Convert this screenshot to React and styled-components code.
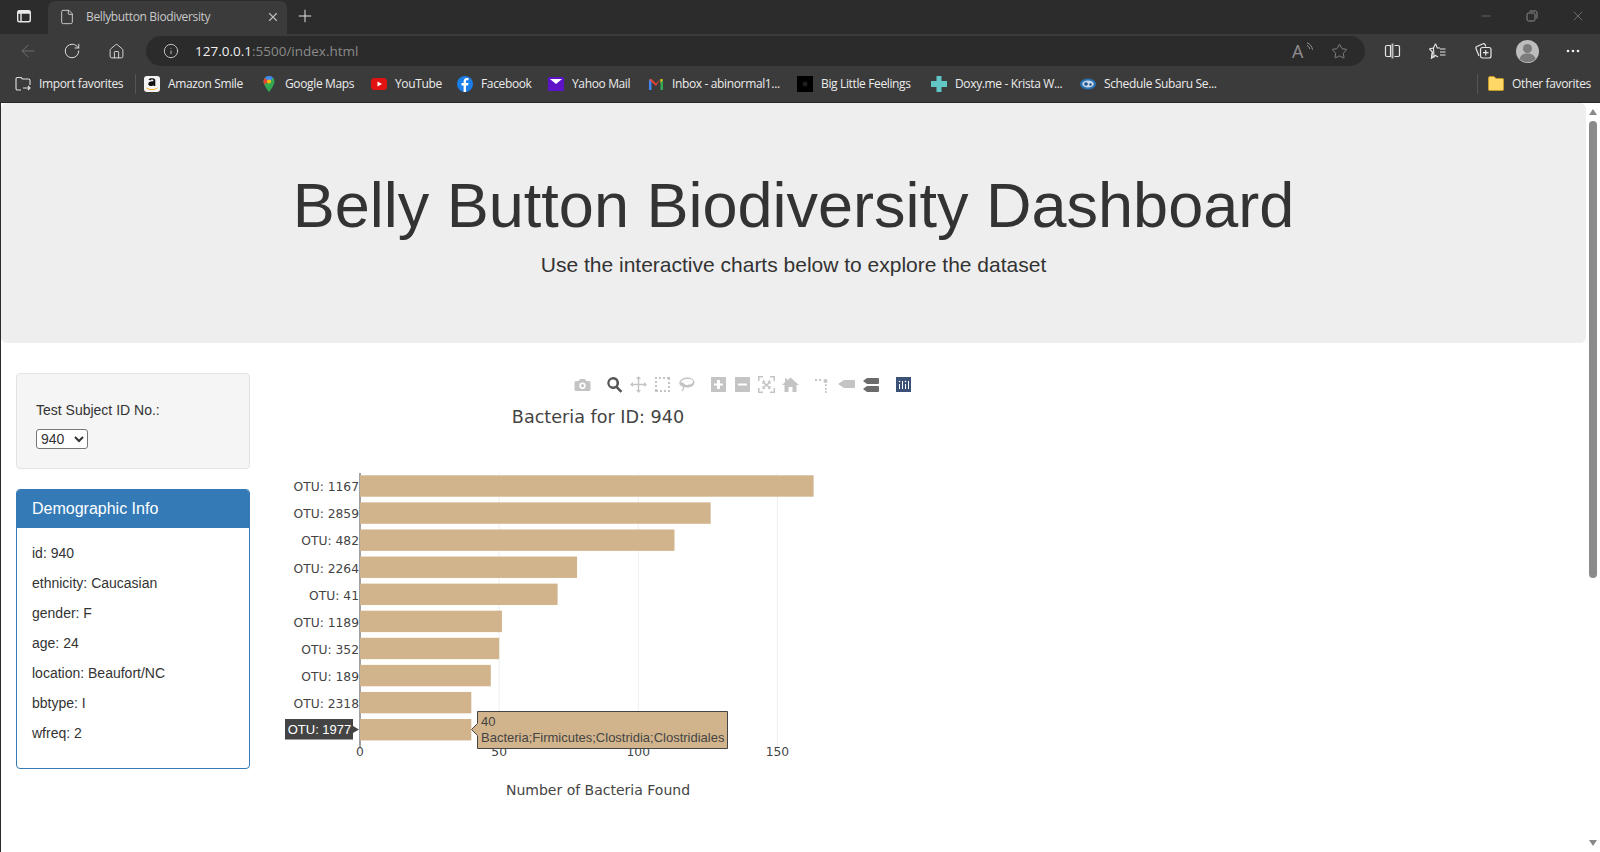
import styled, { createGlobalStyle } from 'styled-components'
import { ArrowLeft, RotateCw, Home, Info, Star, X, Plus, Minus, File } from 'lucide-react'

const GlobalStyle = createGlobalStyle`
	html, body {
		margin: 0;
		height: 100%;
		overflow: hidden;
		background: #fff;
	}
	* {
		box-sizing: border-box;
	}
`

const Window = styled.div`
	width: 1600px;
	height: 852px;
	display: flex;
	flex-direction: column;
	overflow: hidden;
	font-family: 'Liberation Sans', Arial, sans-serif;
	color: #333;
`

const TabStrip = styled.div`
	height: 34px;
	flex: none;
	display: flex;
	align-items: flex-start;
	background: #2c2c2c;
	color: #d8d8d8;
`

const SideButton = styled.div`
	width: 48px;
	height: 32px;
	display: flex;
	align-items: center;
	justify-content: center;
`

const Tab = styled.div`
	width: 239px;
	height: 33px;
	margin-top: 1px;
	display: flex;
	align-items: center;
	padding: 0 7px 2px 11px;
	background: #3b3b3b;
	border-radius: 7px 7px 0 0;
	font: 12px 'Open Sans', sans-serif;
	letter-spacing: -0.35px;
	color: #c9c9c9;
`

const TabTitle = styled.span`
	flex: 1;
	margin-left: 11px;
`

const NewTab = styled.div`
	width: 36px;
	height: 32px;
	display: flex;
	align-items: center;
	justify-content: center;
`

const WindowControls = styled.div`
	margin-left: auto;
	margin-right: -1px;
	display: flex;
	height: 32px;
	color: #8c8c8c;
`

const WindowButton = styled.div`
	width: 46px;
	height: 32px;
	display: flex;
	align-items: center;
	justify-content: center;
`

const Toolbar = styled.div`
	height: 34px;
	flex: none;
	display: flex;
	align-items: center;
	padding-left: 6px;
	background: #3b3b3b;
	color: #e4e4e4;
`

const NavButton = styled.div`
	width: 44px;
	height: 30px;
	display: flex;
	align-items: center;
	justify-content: center;
	color: ${(props) => (props.$dim ? '#6f6f6f' : '#e0e0e0')};
`

const AddressBar = styled.div`
	width: 1219px;
	height: 30px;
	margin-left: 8px;
	display: flex;
	align-items: center;
	padding: 0 17px 0 17px;
	border-radius: 15px;
	background: #2b2b2b;
	color: #d5d5d5;
`

const Url = styled.div`
	margin-left: 16px;
	font: 13.5px 'Open Sans', sans-serif;
	color: #f0f0f0;
	span {
		color: #8a8a8a;
	}
`

const AddressActions = styled.div`
	margin-left: auto;
	display: flex;
	align-items: center;
	gap: 22px;
	color: #8f8f8f;
`

const ReadAloud = styled.div`
	position: relative;
	width: 17px;
	font: 18px 'Open Sans', sans-serif;
	line-height: 18px;
`

const ReadWaves = styled.svg`
	position: absolute;
	top: 0;
	right: -6px;
`

const ToolIcons = styled.div`
	display: flex;
	align-items: center;
	padding-left: 5px;
`

const ToolIcon = styled.div`
	width: 45px;
	height: 30px;
	display: flex;
	align-items: center;
	justify-content: center;
`

const BookmarkBar = styled.div`
	height: 35px;
	flex: none;
	display: flex;
	align-items: center;
	padding: 0 0 3px 15px;
	background: #3b3b3b;
	border-bottom: 1px solid #262626;
`

const Bookmark = styled.div`
	display: flex;
	align-items: center;
	gap: 8px;
	margin-right: ${(props) => props.$after || 17}px;
`

const BookmarkLabel = styled.span`
	width: ${(props) => props.$w}px;
	font: 12px 'Open Sans', sans-serif;
	letter-spacing: -0.36px;
	color: #ececec;
	white-space: nowrap;
`

const Separator = styled.div`
	width: 1px;
	height: 20px;
	margin-right: ${(props) => props.$after}px;
	background: #555;
`

const BookmarkEnd = styled.div`
	margin-left: auto;
	display: flex;
	align-items: center;
`

const Viewport = styled.div`
	flex: 1;
	min-height: 0;
	display: flex;
	border-left: 1px solid #2a2a2a;
`

const Page = styled.main`
	width: 1585px;
	background: #fff;
	overflow: hidden;
`

const Jumbotron = styled.header`
	height: 240px;
	padding: 48px 60px;
	margin-bottom: 30px;
	background: #eee;
	border-radius: 6px;
	text-align: center;
`

const Heading = styled.h1`
	margin: 20px 0 10px;
	font-size: 63px;
	font-weight: 500;
	line-height: 69.3px;
	color: #333;
`

const Lead = styled.p`
	margin: 0;
	font-size: 21px;
	line-height: 30px;
	font-weight: 400;
`

const Row = styled.div`
	display: flex;
	padding-left: 15px;
`

const Sidebar = styled.aside`
	width: 234px;
	flex: none;
`

const Well = styled.div`
	height: 96px;
	padding: 29px 19px 0;
	margin-bottom: 20px;
	background: #f5f5f5;
	border: 1px solid #e3e3e3;
	border-radius: 4px;
	font-size: 14px;
`

const FieldLabel = styled.h6`
	margin: 0 0 11px;
	font-size: 14px;
	font-weight: 500;
	line-height: 15.4px;
`

const SubjectSelect = styled.select`
	display: block;
	width: 52px;
	height: 20px;
	padding: 0;
	font: 14px 'Liberation Sans', Arial, sans-serif;
	color: #333;
	background: #fff;
	border: 1px solid #767676;
	border-radius: 3px;
`

const Panel = styled.section`
	height: 280px;
	border: 1px solid #337ab7;
	border-radius: 4px;
	background: #fff;
	overflow: hidden;
`

const PanelHeading = styled.div`
	height: 37.6px;
	padding: 10px 15px;
	background: #337ab7;
	font-size: 16px;
	line-height: 17.6px;
	color: #fff;
`

const PanelBody = styled.div`
	padding: 15px;
`

const InfoLine = styled.p`
	margin: 0 0 10px;
	font-size: 14px;
	line-height: 20px;
	color: #333;
`

const ChartArea = styled.div`
	position: relative;
	width: 660px;
	height: 450px;
	margin-left: 15px;
	flex: none;
`

const Modebar = styled.div`
	position: absolute;
	top: 3px;
	right: 14px;
	display: flex;
	gap: 15px;
`

const ModeGroup = styled.div`
	display: flex;
	gap: 7px;
`

const ModeIcon = styled.svg`
	display: block;
	width: 17px;
	height: 17px;
	fill: ${(props) => props.$tone || '#c4c4c4'};
`

const PlotlyLogo = styled.svg`
	display: block;
	margin-left: 2px;
`

const PlotSvg = styled.svg`
	display: block;
`

const TickLabel = styled.text`
	font: 12.3px 'DejaVu Sans', Verdana, sans-serif;
	fill: #444;
`

const PlotTitle = styled.text`
	font: ${(props) => props.$size}px 'DejaVu Sans', Verdana, sans-serif;
	fill: #444;
	text-anchor: middle;
`

const HoverText = styled.text`
	font: 13px 'Liberation Sans', Arial, sans-serif;
	fill: ${(props) => (props.$light ? '#fff' : '#444')};
`

const Scrollbar = styled.div`
	width: 14px;
	flex: none;
	display: flex;
	flex-direction: column;
	align-items: center;
	background: #fff;
	padding-top: 6px;
`

const ScrollArrow = styled.div`
	width: 0;
	height: 0;
	border-left: 4.5px solid transparent;
	border-right: 4.5px solid transparent;
	${(props) => (props.$down ? 'border-top' : 'border-bottom')}: 6px solid #8a8a8a;
	${(props) => (props.$down ? 'margin-top: auto; margin-bottom: 6px;' : '')}
`

const ScrollThumb = styled.div`
	width: 8px;
	height: 457px;
	margin-top: 6px;
	border-radius: 4px;
	background: #8b8b8b;
`

const bars = [
	['OTU: 1167', 163],
	['OTU: 2859', 126],
	['OTU: 482', 113],
	['OTU: 2264', 78],
	['OTU: 41', 71],
	['OTU: 1189', 51],
	['OTU: 352', 50],
	['OTU: 189', 47],
	['OTU: 2318', 40],
	['OTU: 1977', 40],
]

const demographics = [
	'id: 940',
	'ethnicity: Caucasian',
	'gender: F',
	'age: 24',
	'location: Beaufort/NC',
	'bbtype: I',
	'wfreq: 2',
]

const bookmarks = [
	{ icon: 'amazon', label: 'Amazon Smile', w: 76 },
	{ icon: 'maps', label: 'Google Maps', w: 69 },
	{ icon: 'youtube', label: 'YouTube', w: 45 },
	{ icon: 'facebook', label: 'Facebook', w: 50 },
	{ icon: 'yahoo', label: 'Yahoo Mail', w: 59 },
	{ icon: 'gmail', label: 'Inbox - abinormal1...', w: 108 },
	{ icon: 'black', label: 'Big Little Feelings', w: 93 },
	{ icon: 'doxy', label: 'Doxy.me - Krista W...', w: 108 },
	{ icon: 'subaru', label: 'Schedule Subaru Se...', w: 113 },
]

function Favicon({ name }) {
	const shapes = {
		amazon: (
			<>
				<rect width="16" height="16" rx="3" fill="#f4f4f4" />
				<path d="M4.500 3.500c1-1.500 6.500-2 6.800.8v5.700H9.500v-.9c-1.300 1.500-5.200 1.400-5.200-1.100 0-2.500 3.100-2.800 5.100-2.800v-.7c0-1.500-2.500-1.300-3-.1z" fill="#111" />
				<path d="M2 11.200c3.400 2.600 8.600 2.600 12 0-1 3.400-10.800 3.900-12 0z" fill="#f90" />
			</>
		),
		maps: (
			<>
				<path d="M8 0a5.500 5.500 0 0 0-5.500 5.500C2.500 9.500 8 16 8 16s5.500-6.500 5.500-10.500A5.500 5.500 0 0 0 8 0z" fill="#34a853" />
				<path d="M8 0a5.500 5.500 0 0 0-4.200 2L8 5.500 12.300 2A5.500 5.500 0 0 0 8 0z" fill="#4285f4" />
				<path d="M2.500 5.500c0 1 .3 2 .8 3L8 5.500 3.800 2a5.500 5.500 0 0 0-1.300 3.500z" fill="#ea4335" />
				<circle cx="8" cy="5.500" r="2" fill="#fbbc04" />
			</>
		),
		youtube: (
			<>
				<rect y="2" width="16" height="12" rx="3.500" fill="#e21212" />
				<path d="M6.500 5.500 11 8l-4.500 2.500z" fill="#fff" />
			</>
		),
		facebook: (
			<>
				<circle cx="8" cy="8" r="8" fill="#1a7fe8" />
				<path d="M9 16V9.500h2.100l.4-2.500H9V5.600c0-.8.4-1.300 1.300-1.300h1.200V2.200C10 1.900 7 1.800 6.600 5v2H4.500v2.500h2.100V16z" fill="#fff" />
			</>
		),
		yahoo: (
			<>
				<rect y="1" width="16" height="14" rx="1.500" fill="#5f13c8" />
				<path d="M2 3h12L8 8z" fill="#fff" />
			</>
		),
		gmail: (
			<>
				<path d="M1 3.500 3.500 3v11H1z" fill="#4285f4" />
				<path d="M12.500 3 15 3.500V14h-2.500z" fill="#34a853" />
				<path d="M1 3.500 3.500 3 8 7.500 12.500 3 8 10z" fill="#ea4335" />
				<path d="M12.500 3 15 3.500 12.500 7z" fill="#fbbc04" />
			</>
		),
		black: (
			<>
				<rect width="16" height="16" fill="#000" />
				<circle cx="8" cy="8" r="2.500" fill="#1d1d1d" />
			</>
		),
		doxy: <path d="M5.500 0h5v5H16v6h-5.500v5h-5v-5H0V5h5.500z" fill="#62c6c6" />,
		subaru: (
			<>
				<ellipse cx="8" cy="8" rx="8" ry="5.500" fill="#2a6fb0" />
				<ellipse cx="8" cy="8" rx="5.800" ry="3.500" fill="#c6d8ea" />
				<circle cx="6" cy="8" r="1.800" fill="#1b4f8a" />
				<circle cx="10.500" cy="8.500" r="1.200" fill="#1b4f8a" />
			</>
		),
	}
	return (
		<svg width="16" height="16" viewBox="0 0 16 16">
			{shapes[name]}
		</svg>
	)
}

function Plot() {
	const x0 = 95
	const perUnit = 2.783
	const firstBar = 102.3
	const step = 27.08
	const barHeight = 21.4

	return (
		<PlotSvg width="660" height="450" viewBox="0 0 660 450">
			{[50, 100, 150].map((tick) => (
				<line
					key={tick}
					x1={x0 + tick * perUnit}
					x2={x0 + tick * perUnit}
					y1="100"
					y2="374"
					stroke="#eee"
				/>
			))}
			<line x1={x0} x2={x0} y1="100" y2="374" stroke="#444" />
			{bars.map(([label, value], i) => (
				<g key={label}>
					<rect
						x={x0}
						y={firstBar + i * step}
						width={value * perUnit}
						height={barHeight}
						fill="#d2b48c"
					/>
					{i < 9 && (
						<TickLabel
							x={x0 - 1}
							y={firstBar + i * step + 16}
							textAnchor="end"
						>
							{label}
						</TickLabel>
					)}
				</g>
			))}
			{[0, 50, 100, 150].map((tick) => (
				<TickLabel key={tick} x={x0 + tick * perUnit} y="383" textAnchor="middle">
					{tick}
				</TickLabel>
			))}
			<PlotTitle $size="17.6" x="333" y="50">
				Bacteria for ID: 940
			</PlotTitle>
			<PlotTitle $size="14" x="333" y="422">
				Number of Bacteria Found
			</PlotTitle>

			<path d="M20 346h68v7l6 3.500-6 3.500v6.500H20z" fill="#444" />
			<HoverText $light x="22.700" y="361">
				OTU: 1977
			</HoverText>

			<path
				d="M206.500 356.500l6-6V338.500H462.500V375.500H212.500V362.500z"
				fill="#d2b48c"
				stroke="#444"
			/>
			<HoverText x="216" y="353">
				40
			</HoverText>
			<HoverText x="216" y="369">
				Bacteria;Firmicutes;Clostridia;Clostridiales
			</HoverText>
		</PlotSvg>
	)
}

const modeIcons = [
	[
		['camera', <path key="p" fillRule="evenodd" d="M6 3h5l1.200 2H15a1.500 1.500 0 0 1 1.500 1.500v7A1.500 1.500 0 0 1 15 15H2a1.500 1.500 0 0 1-1.500-1.500v-7A1.500 1.500 0 0 1 2 5h2.800zM8.500 6.500a3.200 3.200 0 1 0 0 6.400 3.200 3.200 0 0 0 0-6.400zm0 1.600a1.600 1.600 0 1 1 0 3.200 1.600 1.600 0 0 1 0-3.200z" />],
	],
	[
		['zoom', <path key="p" fillRule="evenodd" d="M7 1a6 6 0 0 1 4.900 9.500l4.400 4.400-1.800 1.800-4.400-4.400A6 6 0 1 1 7 1zm0 2.500a3.500 3.500 0 1 0 0 7 3.500 3.500 0 0 0 0-7z" />, '#555'],
		['pan', <path key="p" d="M8.500 0 11 3H9.200v4.800H14V6l3 2.500L14 11V9.200H9.200V14H11l-2.500 3L6 14h1.800V9.200H3V11L0 8.500 3 6v1.800h4.800V3H6z" />],
		['select', <path key="p" d="M1 1h2v2H1zm4 0h2v2H5zm4 0h2v2H9zm4 0h3v3h-2v-1h-1zM1 5h2v2H1zm13 1h2v2h-2zM1 9h2v2H1zm13 1h2v2h-2zM1 13h2v1h1v2H1zm5 1h2v2H6zm4 0h2v2h-2zm4 0h2v2h-2z" />],
		['lasso', <path key="p" fillRule="evenodd" d="M9 1.500c4 0 7.500 2 7.500 5s-3.500 5-7.500 5c-1 0-2-.1-2.800-.4.3 1.600-.5 3.400-2 4.400l-.9-1c1.200-.8 1.800-2 1.600-3.300-.1-.4-.3-.7-.5-1-.7.2-1.500 0-2-.7C1.200 8.200.9 7.300 1.500 6c1-2.800 4-4.500 7.500-4.500zm0 1.500c-3 0-5.600 1.400-6.200 3.500l1 .2c.3-.3 1-.3 1.500 0 .4.200.8.700 1 1.300.8.500 1.800.9 2.700.9 3.500 0 6-1.500 6-3.400S12.500 3 9 3z" />],
	],
	[
		['plus', <path key="p" fillRule="evenodd" d="M1 1h15v15H1zm6 3v3.500H4v2h3V13h3V9.500h3v-2h-3V4z" />],
		['minus', <path key="p" fillRule="evenodd" d="M1 1h15v15H1zm3 6.500v2h9v-2z" />],
		['auto', <path key="p" d="M0 0h5v1.500H1.500V5H0zm12 0h5v5h-1.500V1.500H12zM0 12h1.500v3.500H5V17H0zm15.500 0H17v5h-5v-1.500h3.500zM5 4l2.500 1.500L6.500 6.500 8.500 8l2-1.500-1-1L12 4l1 4-1.200-.5L9.700 9l2.100 1.500L13 10l-1 3.500-2.500-1 1-1-2-1.500-2 1.500 1 1L5 13.500 4 10l1.200.5L7.300 9 5.200 7.500 4 8z" />],
		['home', <path key="p" d="M8.500 1.500 17 9h-2.500v7H10.500v-5h-4v5H2.500V9H0l3-2.700V2.500h2v2z" />],
	],
	[
		['spike', <path key="p" d="M11.500 3a2 2 0 1 1 0 4 2 2 0 0 1 0-4zM1 3h2v2H1zm4 0h2v2H5zm6 5h1.500v2H11zm0 4h1.500v2H11zm0 3h1.500v2H11z" />],
		['closest', <path key="p" d="M6 4h10a1 1 0 0 1 1 1v6a1 1 0 0 1-1 1H6L0 8z" />],
		['compare', <path key="p" d="M5 2h11a1 1 0 0 1 1 1v4a1 1 0 0 1-1 1H5L1 5zm0 8h11a1 1 0 0 1 1 1v4a1 1 0 0 1-1 1H5l-4-3z" />, '#6b6b6b'],
	],
]

function App() {
	return (
		<Window>
			<GlobalStyle />
			<TabStrip>
				<SideButton>
					<svg width="16" height="16" viewBox="0 0 16 16" fill="none" stroke="#e8e8e8" strokeWidth="1.400">
						<rect x="1.700" y="2.700" width="12.600" height="11" rx="1.800" />
						<path d="M5 3v10.500M2 3.500h12M2 5h12" />
					</svg>
				</SideButton>
				<Tab>
					<File size={16} strokeWidth={1.300} color="#dcdcdc" />
					<TabTitle>Bellybutton Biodiversity</TabTitle>
					<X size={14} color="#bcbcbc" />
				</Tab>
				<NewTab>
					<Plus size={20} strokeWidth={1.200} color="#e0e0e0" />
				</NewTab>
				<WindowControls>
					<WindowButton>
						<Minus size={14} strokeWidth={1} />
					</WindowButton>
					<WindowButton>
						<svg width="12" height="12" viewBox="0 0 12 12" fill="none" stroke="currentColor">
							<rect x="1" y="3" width="8" height="8" rx="1.500" />
							<path d="M3.500 1h6a1.500 1.500 0 0 1 1.500 1.500v6" />
						</svg>
					</WindowButton>
					<WindowButton>
						<X size={16} strokeWidth={1} />
					</WindowButton>
				</WindowControls>
			</TabStrip>

			<Toolbar>
				<NavButton $dim>
					<ArrowLeft size={20} strokeWidth={1.200} />
				</NavButton>
				<NavButton>
					<RotateCw size={18} strokeWidth={1.300} />
				</NavButton>
				<NavButton>
					<Home size={17} strokeWidth={1.300} />
				</NavButton>
				<AddressBar>
					<Info size={16} strokeWidth={1.300} />
					<Url>
						127.0.0.1<span>:5500/index.html</span>
					</Url>
					<AddressActions>
						<ReadAloud>
							A
							<ReadWaves width="9" height="11" viewBox="0 0 9 11" fill="none" stroke="currentColor">
								<path d="M1 .8c3 1 5 3.500 5.500 7M1 3.500c1.500.6 2.500 1.800 2.800 3.500" />
							</ReadWaves>
						</ReadAloud>
						<Star size={17} strokeWidth={1.200} />
					</AddressActions>
				</AddressBar>
				<ToolIcons>
					<ToolIcon>
						<svg width="17" height="16" viewBox="0 0 17 16" fill="none" stroke="#e6e6e6" strokeWidth="1.200">
							<path d="M6.500 2.500H3A1.500 1.500 0 0 0 1.500 4v8A1.500 1.500 0 0 0 3 13.500h3.500zM10.500 2.500H14A1.500 1.500 0 0 1 15.500 4v8a1.500 1.500 0 0 1-1.500 1.500h-3.500" />
							<path d="M8.500 0.500v15" stroke="#bbb" strokeWidth="2" />
						</svg>
					</ToolIcon>
					<ToolIcon>
						<svg width="17" height="16" viewBox="0 0 17 16" fill="none" stroke="#e6e6e6" strokeWidth="1.100">
							<path d="M6.500.8 8.300 5h2.700M5 13.800 2.500 15l.9-6L.6 6l3.900-1z" />
							<path d="M6.500.8 4.500 5M3.400 9l-.9 6 4-2.500 2.500 1.500" />
							<path d="M11 6h5.500M11 9h5.500M11 12h5.500" />
						</svg>
					</ToolIcon>
					<ToolIcon>
						<svg width="18" height="18" viewBox="0 0 18 18" fill="none" stroke="#e6e6e6" strokeWidth="1.200">
							<path d="M5 14 2 6.500a1.500 1.500 0 0 1 .8-2L9 1.800a1.500 1.500 0 0 1 2 .7l.8 2" />
							<rect x="6.500" y="5.500" width="10.500" height="10.500" rx="2" />
							<path d="M11.700 8v5.500M9 10.700h5.500" />
						</svg>
					</ToolIcon>
					<ToolIcon>
						<svg width="23" height="23" viewBox="0 0 23 23">
							<circle cx="11.500" cy="11.500" r="11.500" fill="#bdbdbd" />
							<circle cx="11.500" cy="8.500" r="4.500" fill="#7c7c7c" />
							<path d="M3.500 19c1-4 4-5.500 8-5.500s7 1.500 8 5.500a11.500 11.500 0 0 1-16 0z" fill="#7c7c7c" />
						</svg>
					</ToolIcon>
					<ToolIcon>
						<svg width="14" height="4" viewBox="0 0 14 4" fill="#eee">
							<circle cx="2" cy="2" r="1.300" />
							<circle cx="7" cy="2" r="1.300" />
							<circle cx="12" cy="2" r="1.300" />
						</svg>
					</ToolIcon>
				</ToolIcons>
			</Toolbar>

			<BookmarkBar>
				<Bookmark $after={12}>
					<svg width="16" height="16" viewBox="0 0 16 16" fill="none" stroke="#e2e2e2" strokeWidth="1.100">
						<path d="M6 14H2.500A1.500 1.500 0 0 1 1 12.500V3a1.500 1.500 0 0 1 1.500-1.500H6L7.500 3H13.500A1.500 1.500 0 0 1 15 4.500V9" />
						<path d="M8 12h7M13 10l2 2-2 2" />
					</svg>
					<BookmarkLabel $w={84}>Import favorites</BookmarkLabel>
				</Bookmark>
				<Separator $after={8} />
				{bookmarks.map((item) => (
					<Bookmark key={item.label}>
						<Favicon name={item.icon} />
						<BookmarkLabel $w={item.w}>{item.label}</BookmarkLabel>
					</Bookmark>
				))}
				<BookmarkEnd>
					<Separator $after={10} />
					<Bookmark $after={9}>
						<svg width="16" height="15" viewBox="0 0 16 15">
							<path d="M0.500 2A1.500 1.500 0 0 1 2 .5h4L8 2.500h6.500A1 1 0 0 1 15.500 3.500v10a1 1 0 0 1-1 1h-13a1 1 0 0 1-1-1z" fill="#ffd766" stroke="#c49a2c" />
						</svg>
						<BookmarkLabel $w={79}>Other favorites</BookmarkLabel>
					</Bookmark>
				</BookmarkEnd>
			</BookmarkBar>

			<Viewport>
				<Page>
					<Jumbotron>
						<Heading>Belly Button Biodiversity Dashboard</Heading>
						<Lead>Use the interactive charts below to explore the dataset</Lead>
					</Jumbotron>
					<Row>
						<Sidebar>
							<Well>
								<FieldLabel>Test Subject ID No.:</FieldLabel>
								<SubjectSelect defaultValue="940">
									<option value="940">940</option>
								</SubjectSelect>
							</Well>
							<Panel>
								<PanelHeading>Demographic Info</PanelHeading>
								<PanelBody>
									{demographics.map((line) => (
										<InfoLine key={line}>{line}</InfoLine>
									))}
								</PanelBody>
							</Panel>
						</Sidebar>
						<ChartArea>
							<Plot />
							<Modebar>
								{modeIcons.map((group, i) => (
									<ModeGroup key={i}>
										{group.map(([name, shape, tone]) => (
											<ModeIcon key={name} $tone={tone} viewBox="0 0 17 17">
												{shape}
											</ModeIcon>
										))}
									</ModeGroup>
								))}
								<PlotlyLogo width="15" height="17" viewBox="0 0 15 17">
									<rect y="1" width="15" height="15" fill="#3b5178" />
									<path d="M3 8h1v5H3zm3-3h1v8H6zm3 3h1v5H9zm3-3h1v8h-1z" fill="#fff" />
									<circle cx="3.500" cy="5.500" r=".8" fill="#fff" />
									<circle cx="9.500" cy="5.500" r=".8" fill="#fff" />
								</PlotlyLogo>
							</Modebar>
						</ChartArea>
					</Row>
				</Page>
				<Scrollbar>
					<ScrollArrow />
					<ScrollThumb />
					<ScrollArrow $down />
				</Scrollbar>
			</Viewport>
		</Window>
	)
}

export default App
